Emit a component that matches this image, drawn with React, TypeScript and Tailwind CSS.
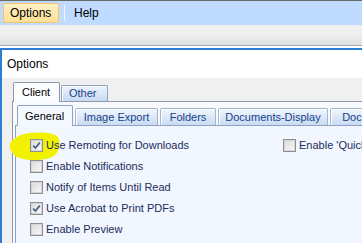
import React from "react";

function Check({ checked }: { checked?: boolean }) {
  return (
    <span className="relative flex h-[13px] w-[13px] shrink-0 items-center justify-center border border-[#8f8f8f] bg-white">
      <span className="flex h-[11px] w-[11px] items-center justify-center border border-[#d6d6d6] bg-gradient-to-br from-[#dcdcdc] to-[#f8f8f8]">
        {checked && (
          <svg width="9" height="9" viewBox="0 0 9 9">
            <path d="M1.2 4.6 L3.4 7 L7.8 1.6" fill="none" stroke="#4a5f80" strokeWidth="1.7" />
          </svg>
        )}
      </span>
    </span>
  );
}

function Row({ label, checked }: { label: string; checked?: boolean }) {
  return (
    <div className="flex h-[21px] items-center gap-[3px] whitespace-nowrap">
      <Check checked={checked} />
      <span className="text-[#1c2b5c]">{label}</span>
    </div>
  );
}

function InnerTab({ label, w }: { label: string; w: string }) {
  return (
    <div
      className={`mt-[3px] flex h-[17px] shrink-0 items-center justify-center whitespace-nowrap rounded-t-[2px] border border-b-0 border-[#a3b6d1] bg-gradient-to-b from-[#f1f6fd] to-[#c9dbf3] text-[#15428b] shadow-[inset_1px_1px_0_#ffffff] ${w}`}
    >
      {label}
    </div>
  );
}

export default function App() {
  return (
    <div
      className="relative h-[243px] w-[362px] overflow-hidden bg-white text-[11px]"
      style={{ fontFamily: '"Liberation Sans", Arial, sans-serif' }}
    >
      {/* menu bar */}
      <div className="flex h-[25px] items-center border-t border-[#6a6a6a] bg-[#bfdbff] pl-[3px] text-[12px] text-black">
        <div className="flex h-[20px] w-[56px] items-center rounded-[2px] border border-[#f3c46b] bg-gradient-to-b from-[#fff1c8] to-[#ffdf95] pl-[6px]">
          Options
        </div>
        <div className="ml-[5px] h-[16px] w-px bg-[#eef5ff]" />
        <div className="ml-[9px]">Help</div>
      </div>
      {/* toolbar strip */}
      <div className="h-[21px] border-b border-[#9eacc0] bg-gradient-to-b from-[#f0f0f0] via-[#eeeeee] to-[#e0e0e0]" />
      <div className="h-[2px] bg-white" />
      {/* dialog */}
      <div className="border-l-2 border-t-2 border-[#2a7fd4]">
        <div className="flex h-[28px] items-center bg-white pl-[5px] text-[12px] text-black">Options</div>
        <div className="h-[165px] bg-[#f0f0f0] pl-[10px] pt-[4px]">
          {/* outer tabs */}
          <div className="flex items-end pl-[1px]">
            <div className="relative z-10 -mb-px flex h-[20px] w-[47px] items-center rounded-t-[2px] border border-b-0 border-[#8d99ab] bg-[#fbfcfe] pl-[8px] text-black">
              Client
            </div>
            <div className="ml-[1px] flex h-[16px] w-[47px] items-center rounded-t-[2px] border border-b-0 border-[#8da3c1] bg-gradient-to-b from-[#eef4fd] to-[#c7d9f2] pl-[7px] text-[#15428b] shadow-[inset_1px_1px_0_#ffffff]">
              Other
            </div>
          </div>
          {/* outer panel */}
          <div className="h-[200px] w-[400px] border-l border-t border-[#8d99ab] bg-[#f7f9fc] pl-[2px] pt-[3px]">
            <div className="flex items-end pl-[2px]">
              <div className="relative z-10 -mb-px flex h-[21px] w-[56px] shrink-0 items-center rounded-t-[2px] border border-b-0 border-[#8da3c1] bg-[#f4f8ff] pl-[7px] text-black">
                General
              </div>
              <div className="ml-[2px] flex items-end gap-[2px]">
                <InnerTab label="Image Export" w="w-[83px]" />
                <InnerTab label="Folders" w="w-[56px]" />
                <InnerTab label="Documents-Display" w="w-[110px]" />
                <InnerTab label="Documents" w="w-[80px]" />
              </div>
            </div>
            <div className="relative h-[200px] border-l border-t border-[#8da3c1] bg-[#f2f7ff] pl-[14px] pt-[9px]">
              {/* highlighter */}
              <svg className="absolute left-[-7px] top-[4px]" width="54" height="32" viewBox="0 0 54 32">
                <path
                  d="M1 14 C3 8 12 4 20 3 C30 2 43 2 48 6 C52 10 51 19 47 24 C43 29 30 31 20 30 C12 29 5 27 3 22 C1 19 0 17 1 14 Z"
                  fill="#f2f200"
                />
              </svg>
              <div className="relative flex">
                <div className="flex w-[253px] shrink-0 flex-col">
                  <Row label="Use Remoting for Downloads" checked />
                  <Row label="Enable Notifications" />
                  <Row label="Notify of Items Until Read" />
                  <Row label="Use Acrobat to Print PDFs" checked />
                  <Row label="Enable Preview" />
                </div>
                <div className="flex shrink-0 flex-col">
                  <Row label="Enable 'Quick Search'" />
                </div>
              </div>
            </div>
          </div>
        </div>
      </div>
    </div>
  );
}
